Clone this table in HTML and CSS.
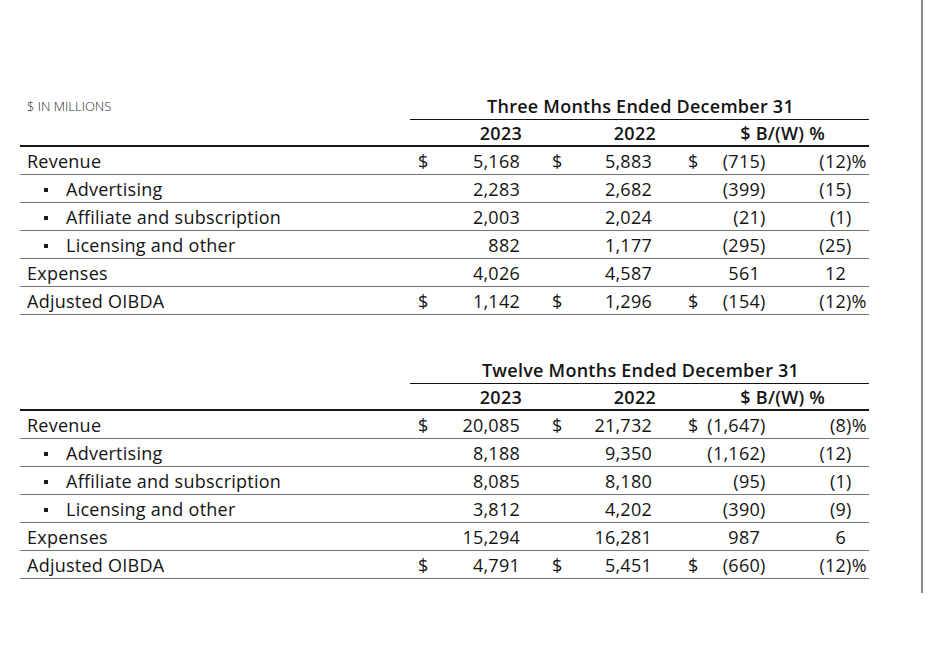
FILE: index.html
```html
<!DOCTYPE html>
<html lang="en">
<head>
<meta charset="utf-8">
<title>Segment results</title>
<link rel="stylesheet" href="styles.css">
</head>
<body>
<div class="frame">
  <div class="content">
    <table class="fin">
      <colgroup>
        <col class="c-label"><col class="c-cur1"><col class="c-n1"><col class="c-cur2"><col class="c-n2"><col class="c-cur3"><col class="c-n3"><col class="c-pct">
      </colgroup>
      <tr class="title-row"><td class="units">$ IN MILLIONS</td><td colspan="7" class="period">Three Months Ended December 31</td></tr>
      <tr class="head-row"><td class="blank"></td><td colspan="3" class="h h1">2023</td><td colspan="2" class="h h2">2022</td><td colspan="2" class="h h3">$ B/(W) %</td></tr>
      <tr><td class="lbl">Revenue</td><td class="cur">$</td><td class="num">5,168</td><td class="cur c2">$</td><td class="num">5,883</td><td class="cur c3">$</td><td class="num">(715<span class="cp">)</span></td><td class="pct">(12<span class="cpp">)%</span></td></tr>
      <tr><td class="lbl sub"><span class="bul"></span>Advertising</td><td class="cur"></td><td class="num">2,283</td><td class="cur c2"></td><td class="num">2,682</td><td class="cur c3"></td><td class="num">(399<span class="cp">)</span></td><td class="pct">(15<span class="cpp">)</span></td></tr>
      <tr><td class="lbl sub"><span class="bul"></span>Affiliate and subscription</td><td class="cur"></td><td class="num">2,003</td><td class="cur c2"></td><td class="num">2,024</td><td class="cur c3"></td><td class="num">(21<span class="cp">)</span></td><td class="pct">(1<span class="cpp">)</span></td></tr>
      <tr><td class="lbl sub"><span class="bul"></span>Licensing and other</td><td class="cur"></td><td class="num">882</td><td class="cur c2"></td><td class="num">1,177</td><td class="cur c3"></td><td class="num">(295<span class="cp">)</span></td><td class="pct">(25<span class="cpp">)</span></td></tr>
      <tr><td class="lbl">Expenses</td><td class="cur"></td><td class="num">4,026</td><td class="cur c2"></td><td class="num">4,587</td><td class="cur c3"></td><td class="num">561</td><td class="pct">12</td></tr>
      <tr><td class="lbl">Adjusted OIBDA</td><td class="cur">$</td><td class="num">1,142</td><td class="cur c2">$</td><td class="num">1,296</td><td class="cur c3">$</td><td class="num">(154<span class="cp">)</span></td><td class="pct">(12<span class="cpp">)%</span></td></tr>
    </table>

    <table class="fin second">
      <colgroup>
        <col class="c-label"><col class="c-cur1"><col class="c-n1"><col class="c-cur2"><col class="c-n2"><col class="c-cur3"><col class="c-n3"><col class="c-pct">
      </colgroup>
      <tr class="title-row"><td class="units"></td><td colspan="7" class="period">Twelve Months Ended December 31</td></tr>
      <tr class="head-row"><td class="blank"></td><td colspan="3" class="h h1">2023</td><td colspan="2" class="h h2">2022</td><td colspan="2" class="h h3">$ B/(W) %</td></tr>
      <tr><td class="lbl">Revenue</td><td class="cur">$</td><td class="num">20,085</td><td class="cur c2">$</td><td class="num">21,732</td><td class="cur c3">$</td><td class="num">(1,647<span class="cp">)</span></td><td class="pct">(8<span class="cpp">)%</span></td></tr>
      <tr><td class="lbl sub"><span class="bul"></span>Advertising</td><td class="cur"></td><td class="num">8,188</td><td class="cur c2"></td><td class="num">9,350</td><td class="cur c3"></td><td class="num">(1,162<span class="cp">)</span></td><td class="pct">(12<span class="cpp">)</span></td></tr>
      <tr><td class="lbl sub"><span class="bul"></span>Affiliate and subscription</td><td class="cur"></td><td class="num">8,085</td><td class="cur c2"></td><td class="num">8,180</td><td class="cur c3"></td><td class="num">(95<span class="cp">)</span></td><td class="pct">(1<span class="cpp">)</span></td></tr>
      <tr><td class="lbl sub"><span class="bul"></span>Licensing and other</td><td class="cur"></td><td class="num">3,812</td><td class="cur c2"></td><td class="num">4,202</td><td class="cur c3"></td><td class="num">(390<span class="cp">)</span></td><td class="pct">(9<span class="cpp">)</span></td></tr>
      <tr><td class="lbl">Expenses</td><td class="cur"></td><td class="num">15,294</td><td class="cur c2"></td><td class="num">16,281</td><td class="cur c3"></td><td class="num">987</td><td class="pct">6</td></tr>
      <tr><td class="lbl">Adjusted OIBDA</td><td class="cur">$</td><td class="num">4,791</td><td class="cur c2">$</td><td class="num">5,451</td><td class="cur c3">$</td><td class="num">(660<span class="cp">)</span></td><td class="pct">(12<span class="cpp">)%</span></td></tr>
    </table>
  </div>
</div>
</body>
</html>
```

FILE: styles.css
```css
html, body {
  margin: 0;
  padding: 0;
  background: #ffffff;
}

body {
  font-family: "Open Sans", "Liberation Sans", sans-serif;
  color: #141414;
}

.frame {
  width: 923px;
  height: 593px;
  border-right: 2px solid #8a8a8a;
  box-sizing: border-box;
}

.content {
  padding: 92px 0 0 20px;
}

.fin {
  border-collapse: separate;
  border-spacing: 0;
  table-layout: fixed;
  width: 849px;
  font-size: 18px;
  line-height: 20px;
  letter-spacing: 0.25px;
}

.fin.second {
  margin-top: 41px;
}

.c-label { width: 390px; }
.c-cur1 { width: 40px; }
.c-n1 { width: 70px; }
.c-cur2 { width: 42px; }
.c-n2 { width: 90px; }
.c-cur3 { width: 46px; }
.c-n3 { width: 62px; }
.c-pct { width: 109px; }

.fin td {
  box-sizing: border-box;
  padding: 0;
  height: 28px;
  border-bottom: 1px solid #737373;
  vertical-align: middle;
  white-space: nowrap;
}

.title-row td {
  border-bottom: none;
  height: 28px;
}

.title-row .period {
  border-bottom: 1px solid #111111;
  text-align: center;
  font-weight: 600;
  padding-left: 2px;
}

.units {
  font-size: 13px;
  font-weight: 300;
  color: #2a2a2a;
  padding-left: 7px !important;
  letter-spacing: 0;
}

.head-row td {
  height: 27px;
  border-bottom: 2px solid #1a1a1a;
  font-weight: 600;
}

.h1 {
  text-align: right;
  padding-right: 40px !important;
}

.h2 {
  text-align: right;
  padding-right: 42px !important;
}

.h3 {
  text-align: right;
  padding-right: 44px !important;
}

.lbl {
  padding-left: 7px !important;
}

.lbl.sub {
  padding-left: 24px !important;
}

.bul {
  display: inline-block;
  width: 4px;
  height: 4px;
  background: #1c1c1c;
  vertical-align: middle;
  margin-right: 18px;
  position: relative;
  top: -1px;
}

.cur {
  padding-left: 8px !important;
}

.cur.c2 {
  padding-left: 32px !important;
}

.cur.c3 {
  padding-left: 36px !important;
}

.num {
  text-align: right;
}

.pct {
  text-align: right;
  padding-right: 23px !important;
}

.cp {
  display: inline-block;
  width: 7px;
  margin-right: -7px;
  text-align: left;
}

.cpp {
  display: inline-block;
  width: 21px;
  margin-right: -21px;
  text-align: left;
}
```
